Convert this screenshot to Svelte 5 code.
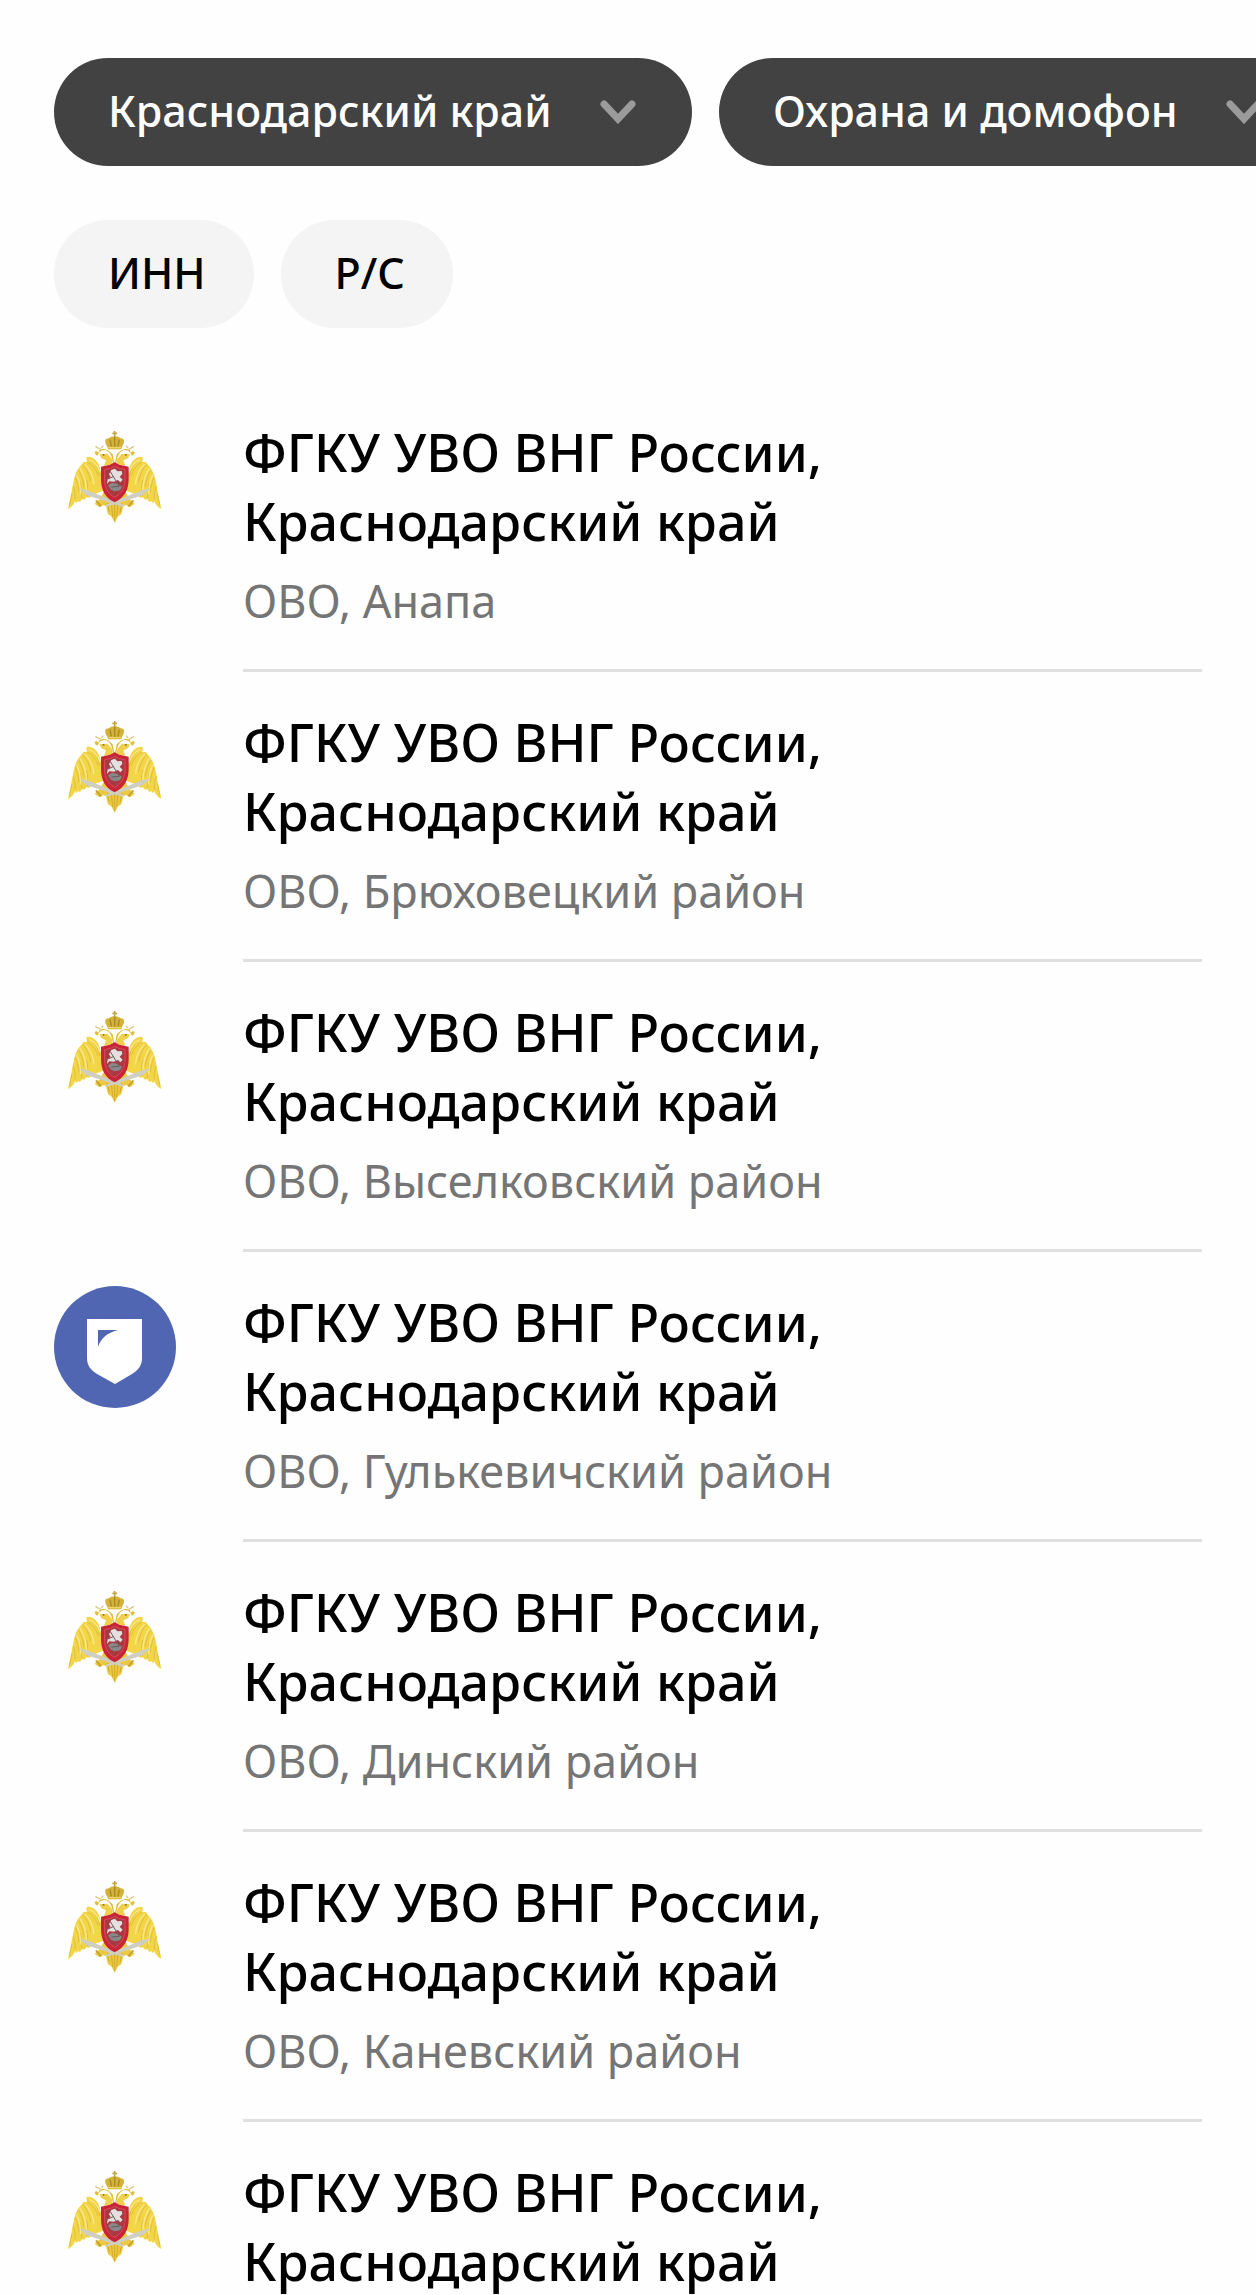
<script>
  const title = 'ФГКУ УВО ВНГ России, Краснодарский край';

  const filters = [
    { id: 'region', label: 'Регион', value: 'Краснодарский край' },
    { id: 'category', label: 'Категория', value: 'Охрана и домофон' },
  ];

  const chips = ['ИНН', 'Р/С'];

  const items = [
    { id: 1, logo: 'eagle', note: 'ОВО, Анапа' },
    { id: 2, logo: 'eagle', note: 'ОВО, Брюховецкий район' },
    { id: 3, logo: 'eagle', note: 'ОВО, Выселковский район' },
    { id: 4, logo: 'shield', note: 'ОВО, Гулькевичский район' },
    { id: 5, logo: 'eagle', note: 'ОВО, Динский район' },
    { id: 6, logo: 'eagle', note: 'ОВО, Каневский район' },
    { id: 7, logo: 'eagle', note: '' },
  ];
</script>

{#snippet wing()}
  <path
    d="M150 160 C146 142 134 126 114 125 C106 126 110 134 112 142 C106 139 98 140 97 147 C84 158 75 176 71 198 C66 222 62 250 54 282 C66 277 71 268 75 258 C77 264 80 266 84 258 C88 263 93 260 96 251 C101 257 106 253 109 246 C116 251 121 248 124 241 L164 226 Z"
    fill="#f3d548"
  />
  <path
    d="M112 142 C126 148 138 162 144 182 M97 148 C108 158 118 176 122 200 M86 166 C94 178 100 196 102 216 M76 188 C82 200 86 216 87 232 M70 214 C74 224 76 238 75 254 M66 236 L58 272 M128 142 C138 150 146 164 150 184 M92 204 C92 222 94 238 96 250 M110 196 C114 212 114 228 110 244"
    fill="none"
    stroke="#dfbf40"
    stroke-width="3"
  />
  <path
    d="M104 148 C116 158 128 176 132 208 M90 160 C100 176 108 196 110 226 M80 180 C88 196 92 210 92 238 M117 133 C132 139 144 154 150 170"
    fill="none"
    stroke="#fae98c"
    stroke-width="4"
  />
  <!-- head with beak -->
  <path
    d="M190 150 C186 130 184 112 168 106 C156 102 148 110 142 122 L136 118 L134 111 L139 108 L146 113 L149 104 L160 101 L174 106 L188 118 L194 150 Z"
    fill="#dfbe3c"
  />
  <path d="M148 118 L172 116 L186 132 L188 148 L162 152 L168 136 L154 130 Z" fill="#efd04a" />
  <path d="M152 103 L136 94 M154 99 L160 92" stroke="#dccb8b" stroke-width="4" />
  <path d="M158 118 L163 121" stroke="#8f7420" stroke-width="4" />
{/snippet}

{#snippet eagle()}
  <svg class="logo" viewBox="12 3 366 366" aria-hidden="true">
    <path d="M164 226 L150 252 L134 266 L148 277 L160 270 L168 274 L174 298 L184 304 L194 323 L204 304 L214 298 L220 274 L228 270 L240 277 L254 266 L238 252 L224 226 Z" fill="#ecca40" />
    <path d="M184 262 L188 306 M194 262 V318 M204 262 L200 306 M172 264 L178 292 M216 264 L210 292" stroke="#d2aa2b" stroke-width="3" />
    {@render wing()}
    <g transform="translate(388 0) scale(-1 1)">{@render wing()}</g>
    <path d="M87 220 L116 227 L222 270 L219 276 L108 240 Z" fill="#cfcec3" />
    <path d="M301 220 L272 227 L166 270 L169 276 L280 240 Z" fill="#cfcec3" />
    <path d="M138 256 L153 274 M250 256 L235 274" stroke="#c8a236" stroke-width="6" />
    <!-- crown -->
    <path d="M172 95 C163 82 163 70 176 70 C184 62 204 62 212 70 C225 70 225 82 216 95 L214 103 H174 Z" fill="#d3b13a" />
    <path d="M180 74 L184 94 M194 65 V95 M208 74 L204 94" stroke="#a58a28" stroke-width="4" />
    <path d="M175 98 H213" stroke="#f0d76c" stroke-width="4" />
    <path d="M194 48 V66 M187 55 H201" stroke="#c4a443" stroke-width="5" />
    <!-- red shield with the rider -->
    <path d="M194 142 L208 149 L236 155 V195 C235 226 222 249 194 262 C166 249 154 226 153 195 V155 L180 149 Z" fill="#c72436" />
    <path d="M194 154 L207 160 L225 164 V196 C224 220 214 236 194 247 C174 236 165 220 164 196 V164 L181 160 Z" fill="#a93843" stroke="#d94c58" stroke-width="3" />
    <path d="M184 165 L195 161 L202 169 L215 168 L217 177 L209 185 L218 194 L211 202 L204 195 L192 200 L178 199 L171 207 L173 193 L182 186 L177 178 Z" fill="#e5e0df" />
    <path d="M174 211 L186 203 L200 206 L216 215 L210 226 L194 229 L183 224 Z" fill="#8b8788" />
    <path d="M181 170 L208 214 M174 192 L192 184 M184 216 L208 214" stroke="#695f62" stroke-width="3" />
  </svg>
{/snippet}

{#snippet shield()}
  <svg class="logo" viewBox="0 0 122 122" aria-hidden="true">
    <circle cx="61" cy="61" r="61" fill="#5066b2" />
    <path d="M33 33 H88 V72 C88 80 84 84 78 88 L61 98 L43 88 C37 84 33 80 33 72 Z" fill="#fff" />
    <path d="M44 44 H64 C53 47 47 52 44 61 Z" fill="#5066b2" />
  </svg>
{/snippet}

<main>
  <div class="filters">
    {#each filters as filter (filter.id)}
      <label class="filter" for={filter.id}>
        <select id={filter.id} aria-label={filter.label}>
          <option>{filter.value}</option>
        </select>
        <svg class="chevron" viewBox="0 0 36 24" aria-hidden="true">
          <path d="M4 4 L18 19 L32 4" />
        </svg>
      </label>
    {/each}
  </div>

  <div class="chips">
    {#each chips as chip}
      <button type="button">{chip}</button>
    {/each}
  </div>

  <ul>
    {#each items as item (item.id)}
      <li>
        <a href="#item-{item.id}">
          {#if item.logo === 'eagle'}
            {@render eagle()}
          {:else}
            {@render shield()}
          {/if}
          <div class="info">
            <h2>{title}</h2>
            {#if item.note}
              <p>{item.note}</p>
            {/if}
          </div>
        </a>
      </li>
    {/each}
  </ul>
</main>

<style>
  :global(body) {
    background: #fefefe;
  }

  * {
    box-sizing: border-box;
    margin: 0;
    padding: 0;
  }

  main {
    height: 100vh;
    overflow: hidden;
    padding: 58px 54px 0;
    color: #000;
    font-family: 'Noto Sans', 'Open Sans', sans-serif;
  }

  .filters,
  .chips {
    display: flex;
    gap: 27px;
    margin-bottom: 54px;
  }

  /* the filter strip runs off the right edge */
  .filters {
    margin-right: -54px;
    overflow: hidden;
  }

  .filter,
  button {
    flex: none;
    height: 108px;
    border: 0;
    border-radius: 54px;
    font: 500 43px/60px 'Noto Sans', 'Open Sans', sans-serif;
  }

  .filter {
    display: flex;
    align-items: center;
    gap: 48px;
    padding: 0 56px 0 54px;
    background: #424242;
    color: #fff;
  }

  select {
    padding-bottom: 2px;
    appearance: none;
    border: 0;
    background: none;
    color: inherit;
    font: inherit;
  }

  .chevron {
    width: 36px;
    height: 24px;
    fill: none;
    stroke: #9b9b9b;
    stroke-width: 7;
    stroke-linecap: round;
  }

  button {
    padding: 0 48px 2px 54px;
    background: #f4f4f4;
    color: #000;
  }

  ul {
    list-style: none;
  }

  a {
    display: flex;
    gap: 67px;
    padding-top: 34px;
    color: inherit;
    text-decoration: none;
  }

  .logo {
    flex: none;
    width: 122px;
    height: 122px;
  }

  .info {
    flex: 1;
    padding: 1px 0 38px;
    border-bottom: 3px solid #e0e0e0;
  }

  h2 {
    max-width: 700px;
    font-size: 52px;
    font-weight: 500;
    line-height: 69px;
  }

  p {
    margin-top: 16px;
    color: #757575;
    font-size: 45px;
    line-height: 60px;
  }
</style>
